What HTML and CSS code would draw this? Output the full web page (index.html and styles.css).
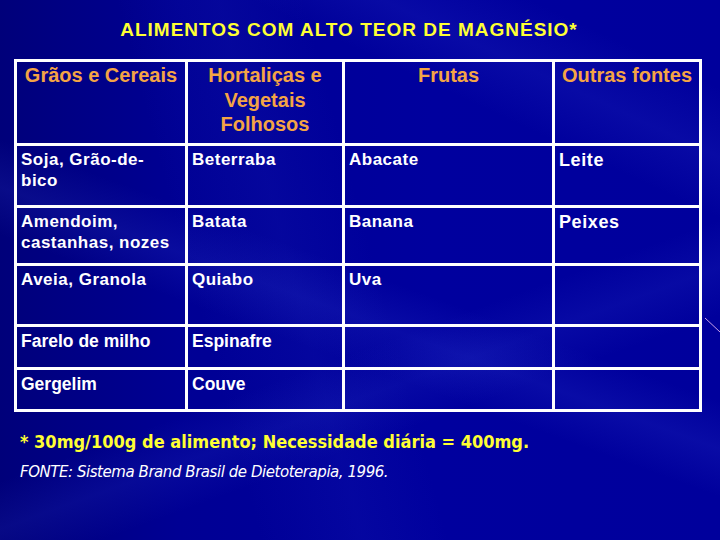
FILE: index.html
```html
<!DOCTYPE html>
<html lang="pt">
<head>
<meta charset="utf-8">
<title>Alimentos com alto teor de magnésio</title>
<link rel="stylesheet" href="styles.css">
</head>
<body>
<div class="slide">
  <h1 class="title">ALIMENTOS COM ALTO TEOR DE MAGNÉSIO*</h1>
  <div class="table">
    <div class="cell head">Grãos e Cereais</div>
    <div class="cell head">Hortaliças e Vegetais Folhosos</div>
    <div class="cell head">Frutas</div>
    <div class="cell head">Outras fontes</div>

    <div class="cell">Soja, Grão-de-bico</div>
    <div class="cell">Beterraba</div>
    <div class="cell">Abacate</div>
    <div class="cell big">Leite</div>

    <div class="cell">Amendoim, castanhas, nozes</div>
    <div class="cell">Batata</div>
    <div class="cell">Banana</div>
    <div class="cell big">Peixes</div>

    <div class="cell">Aveia, Granola</div>
    <div class="cell">Quiabo</div>
    <div class="cell">Uva</div>
    <div class="cell"></div>

    <div class="cell narrow">Farelo de milho</div>
    <div class="cell narrow">Espinafre</div>
    <div class="cell"></div>
    <div class="cell"></div>

    <div class="cell narrow">Gergelim</div>
    <div class="cell narrow">Couve</div>
    <div class="cell"></div>
    <div class="cell"></div>
  </div>
  <p class="note">* 30mg/100g de alimento; Necessidade diária = 400mg.</p>
  <p class="source">FONTE: Sistema Brand Brasil de Dietoterapia, 1996.</p>
  <svg class="deco" width="20" height="30" viewBox="0 0 20 30"><line x1="3" y1="2" x2="18" y2="16" stroke="#c9a0e8" stroke-width="1"/></svg>
</div>
</body>
</html>
```

FILE: styles.css
```css
html, body {
  margin: 0;
  padding: 0;
}
body {
  width: 720px;
  height: 540px;
  overflow: hidden;
}
.slide {
  position: relative;
  width: 720px;
  height: 540px;
  box-sizing: border-box;
  padding: 0 0 0 14px;
  display: flex;
  flex-direction: column;
  align-items: flex-start;
  background-color: #00009c;
  background-image:
    linear-gradient(200deg, rgba(70,90,230,0) 50%, rgba(70,90,230,0.13) 56%, rgba(70,90,230,0) 62%),
    linear-gradient(160deg, rgba(60,80,220,0) 60%, rgba(60,80,220,0.12) 66%, rgba(60,80,220,0) 72%),
    linear-gradient(75deg, rgba(60,80,220,0) 30%, rgba(60,80,220,0.08) 42%, rgba(60,80,220,0) 52%),
    linear-gradient(25deg, rgba(80,100,240,0) 75%, rgba(80,100,240,0.10) 82%, rgba(80,100,240,0) 90%),
    linear-gradient(90deg, #00007a 0%, #000094 25%, #00009e 60%, #00009c 100%);
  font-family: "Liberation Sans", Arial, sans-serif;
}
.title {
  margin: 19px 0 18px 0;
  width: 670px;
  height: 22px;
  text-align: center;
  font-size: 19px;
  line-height: 22px;
  font-weight: bold;
  color: #ffff33;
  letter-spacing: 1px;
}
.table {
  display: grid;
  grid-template-columns: 171px 157px 210px 147px;
  grid-template-rows: 84px 62px 58px 61px 43px 42px;
  border-left: 3px solid #fff;
  border-top: 3px solid #fff;
}
.cell {
  box-sizing: border-box;
  border-right: 3px solid #fff;
  border-bottom: 3px solid #fff;
  padding: 3px 4px 0 4px;
  color: #fff;
  font-weight: bold;
  font-size: 17px;
  line-height: 21px;
  letter-spacing: 0.5px;
}
.cell.head {
  padding: 1px 4px 0 4px;
  text-align: center;
  color: #f4a445;
  font-size: 20px;
  line-height: 24.5px;
  letter-spacing: 0;
}
.cell.big {
  font-size: 18px;
  letter-spacing: 0.6px;
  padding-top: 4px;
}
.cell.narrow {
  font-size: 17.5px;
  letter-spacing: 0;
  padding-top: 4px;
}
.note {
  margin: 20px 0 0 6px;
  font-family: "DejaVu Sans Condensed", "DejaVu Sans", sans-serif;
  font-weight: bold;
  font-size: 18px;
  line-height: 20px;
  color: #ffff33;
}
.source {
  margin: 10px 0 0 6px;
  font-family: "DejaVu Sans", sans-serif;
  font-weight: 200;
  font-style: italic;
  font-size: 15px;
  line-height: 20px;
  color: #ffffff;
  letter-spacing: -0.45px;
}
.deco {
  position: absolute;
  left: 702px;
  top: 316px;
}
```
